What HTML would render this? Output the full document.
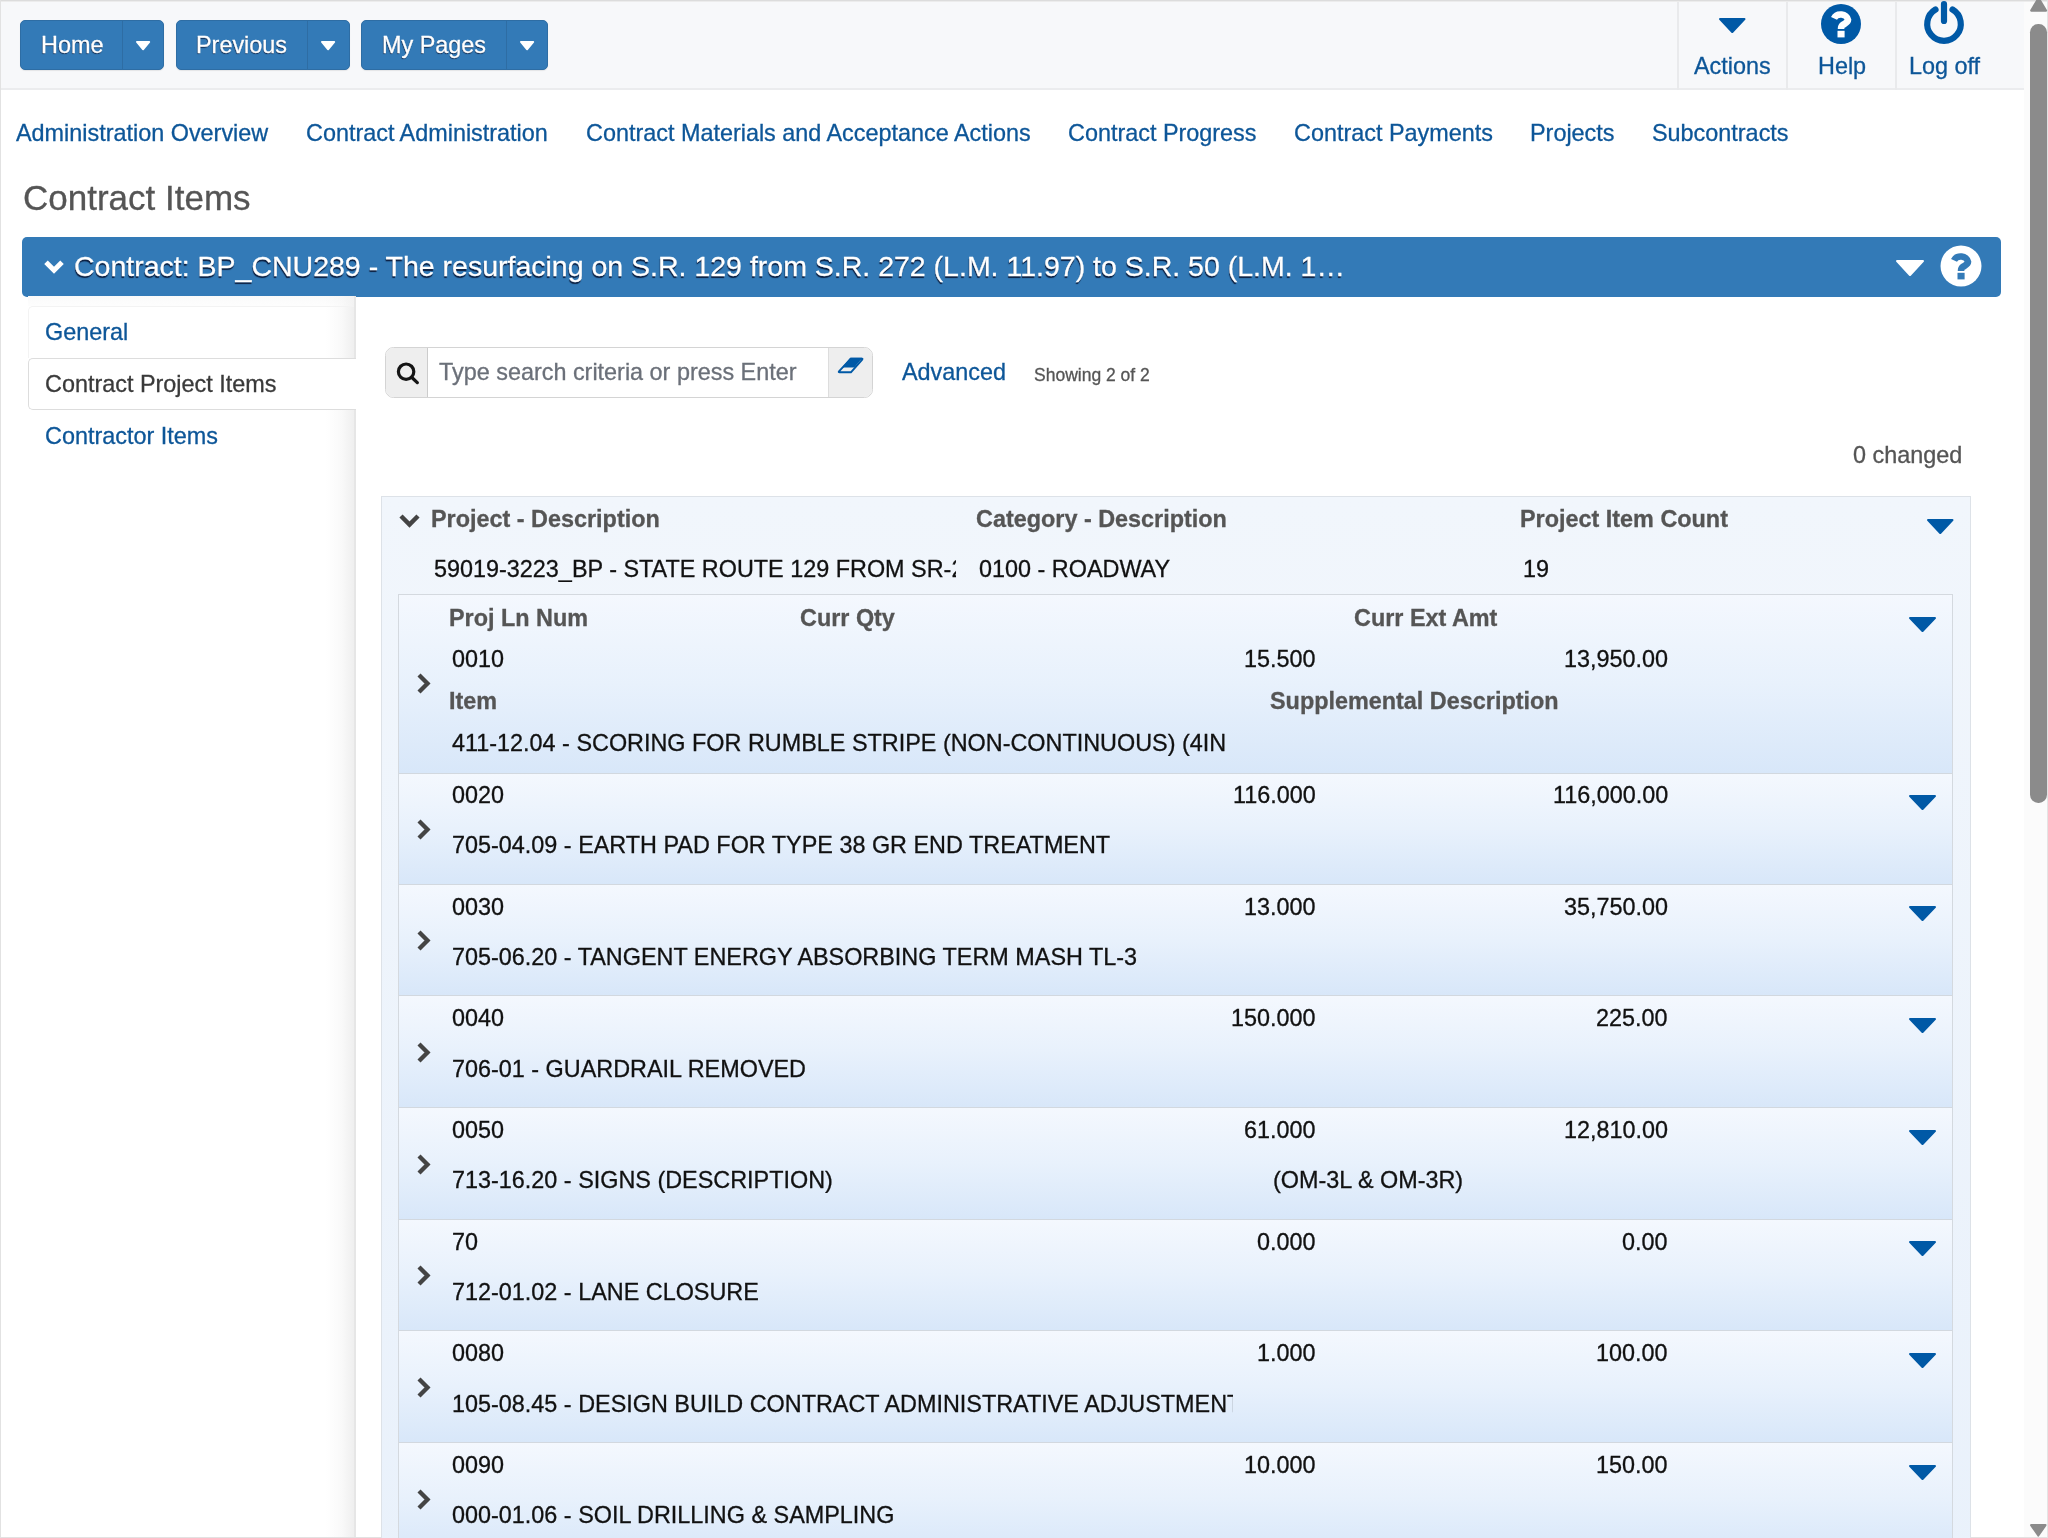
<!DOCTYPE html><html><head><meta charset="utf-8"><title>Contract Items</title><style>
*{margin:0;padding:0;box-sizing:border-box}
html,body{width:2048px;height:1538px;overflow:hidden;background:#fff}
body{font-family:"Liberation Sans",sans-serif;font-size:23.4px;color:#222;position:relative}
.t{position:absolute;white-space:nowrap;line-height:26px;will-change:transform;-webkit-text-stroke:0.3px currentColor}
.lnk{color:#0d5698}
.hd{font-weight:bold;color:#555}
.dk{color:#111}
.abs{position:absolute}
</style></head><body>
<div class="abs" style="left:0;top:0;width:2024px;height:90px;background:#f7f8fa;border-bottom:2px solid #ebecee"></div>
<div class="abs" style="left:0;top:0;width:2048px;height:1px;background:#dcdcdc"></div>
<div class="abs" style="left:0;top:1px;width:2048px;height:1px;background:#ececec"></div>
<div class="abs" style="left:0;top:0;width:1px;height:1538px;background:#e2e2e2"></div>
<div class="abs" style="left:0;top:1537px;width:2048px;height:1px;background:#e2e2e2"></div>
<div class="abs btn" style="left:19.5px;top:20px;width:144.5px;height:50px;background:#337ab7;border:1px solid #2e6da4;border-radius:5px;box-shadow:0 1px 1px rgba(0,0,0,.08)"></div><div class="abs" style="left:122px;top:21px;width:1px;height:48px;background:#2e6da4"></div>
<div class="abs btn" style="left:176px;top:20px;width:174px;height:50px;background:#337ab7;border:1px solid #2e6da4;border-radius:5px;box-shadow:0 1px 1px rgba(0,0,0,.08)"></div><div class="abs" style="left:307px;top:21px;width:1px;height:48px;background:#2e6da4"></div>
<div class="abs btn" style="left:361px;top:20px;width:187px;height:50px;background:#337ab7;border:1px solid #2e6da4;border-radius:5px;box-shadow:0 1px 1px rgba(0,0,0,.08)"></div><div class="abs" style="left:506px;top:21px;width:1px;height:48px;background:#2e6da4"></div>
<div class="t " style="left:40.5px;top:32.20px;color:#fff;text-shadow:-0.4px 1.4px 1px rgba(0,5,30,.75)">Home</div>

<div class="t " style="left:196px;top:32.20px;color:#fff;text-shadow:-0.4px 1.4px 1px rgba(0,5,30,.75)">Previous</div>

<div class="t " style="left:382px;top:32.20px;color:#fff;text-shadow:-0.4px 1.4px 1px rgba(0,5,30,.75)">My Pages</div>

<svg class="abs" style="left:135.20px;top:40.00px" width="16.20" height="11.30" viewBox="0 0 16.20 11.30"><path d="M1.90 1.90 L14.30 1.90 L8.10 9.40 Z" fill="#fff" stroke="#fff" stroke-width="1.8" stroke-linejoin="round"/></svg>
<svg class="abs" style="left:320.20px;top:40.00px" width="16.20" height="11.30" viewBox="0 0 16.20 11.30"><path d="M1.90 1.90 L14.30 1.90 L8.10 9.40 Z" fill="#fff" stroke="#fff" stroke-width="1.8" stroke-linejoin="round"/></svg>
<svg class="abs" style="left:519.20px;top:40.00px" width="16.20" height="11.30" viewBox="0 0 16.20 11.30"><path d="M1.90 1.90 L14.30 1.90 L8.10 9.40 Z" fill="#fff" stroke="#fff" stroke-width="1.8" stroke-linejoin="round"/></svg>
<div class="abs" style="left:1677px;top:2px;width:2px;height:88px;background:#e9eaec"></div>
<div class="abs" style="left:1785.5px;top:2px;width:2px;height:88px;background:#e9eaec"></div>
<div class="abs" style="left:1894.5px;top:2px;width:2px;height:88px;background:#e9eaec"></div>
<svg class="abs" style="left:1718.00px;top:17.00px" width="28.50" height="17.00" viewBox="0 0 28.50 17.00"><path d="M2.10 2.10 L26.40 2.10 L14.25 14.90 Z" fill="#0059a6" stroke="#0059a6" stroke-width="2.2" stroke-linejoin="round"/></svg>
<div class="t lnk" style="left:1694px;top:53.30px;">Actions</div>

<svg class="abs" style="left:1816.00px;top:-0.60px" width="50" height="50" viewBox="-25 -25 50 50"><circle cx="0" cy="0" r="20" fill="#0059a6"/><path d="M-7.0 -5.6 A7.3 6.2 0 0 1 7.0 -4.2 C7.0 -1.4 3.8 -0.6 1.5 1.2 Q0.05 2.3 0.05 5.0" fill="none" stroke="#fff" stroke-width="6.6"/><rect x="-3.5" y="6.8" width="7.1" height="6.6" fill="#fff"/></svg>
<div class="t lnk" style="left:1817.7px;top:53.30px;">Help</div>

<svg class="abs" style="left:1921px;top:0px" width="46" height="48" viewBox="0 0 46 48"><path d="M14.5 9.5 A16.8 16.8 0 1 0 31.5 9.5" fill="none" stroke="#0059a6" stroke-width="6.2" stroke-linecap="round"/><line x1="23" y1="4" x2="23" y2="21" stroke="#0059a6" stroke-width="6.2" stroke-linecap="round"/></svg>
<div class="t lnk" style="left:1908.5px;top:53.30px;">Log off</div>

<div class="abs" style="left:2024px;top:2px;width:23px;height:1535px;background:#fbfbfb"></div>
<div class="abs" style="left:2047px;top:0;width:1px;height:1538px;background:#e4e4e4"></div>
<div class="abs" style="left:2030.3px;top:24.2px;width:16.4px;height:779px;background:#8b8b8b;border-radius:8.2px"></div>
<svg class="abs" style="left:2029px;top:-4px" width="19" height="17" viewBox="0 0 19 17"><path d="M9.6 2.2 L17 14.6 L2.2 14.6 Z" fill="#8b8b8b" stroke="#8b8b8b" stroke-width="2.2" stroke-linejoin="round"/></svg>
<svg class="abs" style="left:2029.10px;top:1523.30px" width="18.60" height="14.60" viewBox="0 0 18.60 14.60"><path d="M2.10 2.10 L16.50 2.10 L9.30 12.50 Z" fill="#8b8b8b" stroke="#8b8b8b" stroke-width="2.2" stroke-linejoin="round"/></svg>
<div class="t lnk" style="left:16px;top:119.60px;">Administration Overview</div>

<div class="t lnk" style="left:306px;top:119.60px;">Contract Administration</div>

<div class="t lnk" style="left:585.5px;top:119.60px;">Contract Materials and Acceptance Actions</div>

<div class="t lnk" style="left:1068px;top:119.60px;">Contract Progress</div>

<div class="t lnk" style="left:1294px;top:119.60px;">Contract Payments</div>

<div class="t lnk" style="left:1530px;top:119.60px;">Projects</div>

<div class="t lnk" style="left:1652px;top:119.60px;">Subcontracts</div>

<div class="t" style="left:23px;top:178.1px;font-size:35px;line-height:40px;color:#555">Contract Items</div>
<div class="abs" style="left:22px;top:236.5px;width:1979px;height:60px;background:#337ab7;border-radius:5px"></div>
<svg class="abs" style="left:42px;top:258px" width="24" height="18" viewBox="0 0 24 18"><path d="M4 4.3 L12 12.3 L20 4.3" fill="none" stroke="#fff" stroke-width="5"/></svg>
<div class="t" style="left:74.3px;top:251.2px;font-size:28.5px;line-height:31px;color:#fff;text-shadow:-0.4px 1.5px 1px rgba(0,5,30,.8)">Contract: BP_CNU289 - The resurfacing on S.R. 129 from S.R. 272 (L.M. 11.97) to S.R. 50 (L.M. 1…</div>
<svg class="abs" style="left:1894.60px;top:259.10px" width="30.00" height="18.00" viewBox="0 0 30.00 18.00"><path d="M2.10 2.10 L27.90 2.10 L15.00 15.90 Z" fill="#fff" stroke="#fff" stroke-width="2.2" stroke-linejoin="round"/></svg>
<svg class="abs" style="left:1936.20px;top:241.30px" width="50" height="50" viewBox="-25 -25 50 50"><circle cx="0" cy="0" r="20.5" fill="#fff"/><path d="M-7.0 -5.6 A7.3 6.2 0 0 1 7.0 -4.2 C7.0 -1.4 3.8 -0.6 1.5 1.2 Q0.05 2.3 0.05 5.0" fill="none" stroke="#337ab7" stroke-width="6.6"/><rect x="-3.5" y="6.8" width="7.1" height="6.6" fill="#337ab7"/></svg>
<div class="abs" style="left:28px;top:296px;width:328px;height:1241px;background:linear-gradient(to right,#fff 0,#fff 298px,#f9f9f9 314px,#efefef 326px)"></div>
<div class="abs" style="left:354px;top:296px;width:2px;height:1241px;background:#e6e6e6"></div>
<div class="abs" style="left:28px;top:296px;width:326px;height:10px;background:linear-gradient(to bottom,rgba(244,244,244,.5),rgba(250,250,250,.3))"></div>
<div class="abs" style="left:28px;top:306px;width:326px;height:52px;border:1px solid #f3f3f3;border-right:none;border-bottom:none;border-radius:5px 0 0 0"></div>
<div class="abs" style="left:28px;top:357.5px;width:328px;height:52px;background:#fff;border:1px solid #ddd;border-right:none;border-radius:5px 0 0 5px"></div>
<div class="t lnk" style="left:45px;top:318.70px;">General</div>

<div class="t " style="left:45px;top:371.00px;color:#3a3a3a">Contract Project Items</div>

<div class="t lnk" style="left:45px;top:423.00px;">Contractor Items</div>

<div class="abs" style="left:385px;top:347px;width:488px;height:51px;border:1px solid #d4d4d4;border-radius:8.5px;background:#fff;overflow:hidden"><div class="abs" style="left:0;top:0;width:42px;height:49px;background:#eee;border-right:1px solid #ccc"></div><div class="abs" style="left:442px;top:0;width:45px;height:49px;background:#eee;border-left:1px solid #ddd"></div></div>
<svg class="abs" style="left:395px;top:360px" width="26" height="26" viewBox="0 0 26 26"><circle cx="11.1" cy="11.7" r="7.7" fill="none" stroke="#151515" stroke-width="3.2"/><line x1="16.6" y1="17.2" x2="22.3" y2="22.6" stroke="#151515" stroke-width="3.3" stroke-linecap="round"/></svg>
<div class="t " style="left:438.5px;top:359.00px;color:#6b7079">Type search criteria or press Enter</div>

<svg class="abs" style="left:826px;top:346px" width="50" height="40" viewBox="0 0 50 40"><path d="M24.8 12.6 L35.6 12.6 Q37 12.6 36.2 13.6 L24.9 26.3 L13.6 26.3 Q12.2 26.3 13 25.3 Z" fill="none" stroke="#0059a6" stroke-width="1.9" stroke-linejoin="round"/><path d="M24.3 11.7 L36.5 11.7 L28.3 21.6 L16.2 21.6 Z" fill="#0059a6"/></svg>
<div class="t lnk" style="left:902px;top:358.50px;">Advanced</div>

<div class="t" style="left:1034px;top:364.5px;font-size:17.5px;line-height:20px;color:#555">Showing 2 of 2</div>
<div class="t " style="right:85.5px;top:442.20px;color:#555">0 changed</div>

<div class="abs" style="left:381px;top:496px;width:1590px;height:1100px;border:1px solid #dde2e8;background:linear-gradient(to bottom,#f1f6fc,#e9f1fb)"></div>
<svg class="abs" style="left:397px;top:512px" width="26" height="18" viewBox="0 0 26 18"><path d="M4 4 L12.5 12.5 L21 4" fill="none" stroke="#444" stroke-width="4.5"/></svg>
<div class="t hd" style="left:430.5px;top:506.30px;">Project - Description</div>

<div class="t hd" style="left:975.5px;top:505.80px;">Category - Description</div>

<div class="t hd" style="left:1519.5px;top:505.80px;">Project Item Count</div>

<svg class="abs" style="left:1925.50px;top:518.10px" width="28.50" height="17.00" viewBox="0 0 28.50 17.00"><path d="M2.10 2.10 L26.40 2.10 L14.25 14.90 Z" fill="#0059a6" stroke="#0059a6" stroke-width="2.2" stroke-linejoin="round"/></svg>
<div class="t dk" style="left:434px;top:556px;width:522px;overflow:hidden">59019-3223_BP - STATE ROUTE 129 FROM SR-272 TO SR-50</div>
<div class="t dk" style="left:979px;top:556.00px;">0100 - ROADWAY</div>

<div class="t dk" style="left:1523px;top:556.00px;">19</div>

<div class="abs" style="left:398px;top:594px;width:1555px;height:950px;border-left:1px solid #d4d9df;border-right:1px solid #d4d9df;border-top:1px solid #d4d9df"></div>
<div class="abs" style="left:399px;top:595px;width:1553px;height:179px;background:linear-gradient(to bottom,#f4f8fe 0%,#e8f1fc 50%,#d8e7f9 100%);border-bottom:1px solid #d2d8df"></div>
<div class="t hd" style="left:449.3px;top:604.90px;">Proj Ln Num</div>

<div class="t hd" style="left:800.4px;top:604.90px;">Curr Qty</div>

<div class="t hd" style="left:1353.8px;top:604.90px;">Curr Ext Amt</div>

<div class="t dk" style="left:452px;top:646.20px;">0010</div>

<div class="t dk" style="right:732px;top:646.20px;">15.500</div>

<div class="t dk" style="right:380px;top:646.20px;">13,950.00</div>

<div class="t hd" style="left:449px;top:688.40px;">Item</div>

<div class="t hd" style="left:1270px;top:688.40px;">Supplemental Description</div>

<div class="t dk" style="left:452px;top:730.1px;width:776px;overflow:hidden">411-12.04 - SCORING FOR RUMBLE STRIPE (NON-CONTINUOUS) (4IN WIDE)</div>
<svg class="abs" style="left:413px;top:671.0px" width="22" height="26" viewBox="0 0 22 26"><path d="M6 4 L14.5 12.5 L6 21" fill="none" stroke="#444" stroke-width="4.3"/></svg>
<svg class="abs" style="left:1907.50px;top:616.30px" width="29.00" height="17.00" viewBox="0 0 29.00 17.00"><path d="M2.10 2.10 L26.90 2.10 L14.50 14.90 Z" fill="#0059a6" stroke="#0059a6" stroke-width="2.2" stroke-linejoin="round"/></svg>
<div class="abs" style="left:399px;top:774px;width:1553px;height:111px;background:linear-gradient(to bottom,#f4f8fe 0%,#e8f1fc 50%,#d8e7f9 100%);border-bottom:1px solid #d2d8df"></div>
<div class="t dk" style="left:452px;top:782.00px;">0020</div>

<div class="t dk" style="right:732px;top:782.00px;">116.000</div>

<div class="t dk" style="right:380px;top:782.00px;">116,000.00</div>

<div class="t dk" style="left:452px;top:832.3px;width:781px;overflow:hidden">705-04.09 - EARTH PAD FOR TYPE 38 GR END TREATMENT</div>
<svg class="abs" style="left:413px;top:816.6px" width="22" height="26" viewBox="0 0 22 26"><path d="M6 4 L14.5 12.5 L6 21" fill="none" stroke="#444" stroke-width="4.3"/></svg>
<svg class="abs" style="left:1907.50px;top:793.80px" width="29.00" height="17.00" viewBox="0 0 29.00 17.00"><path d="M2.10 2.10 L26.90 2.10 L14.50 14.90 Z" fill="#0059a6" stroke="#0059a6" stroke-width="2.2" stroke-linejoin="round"/></svg>
<div class="abs" style="left:399px;top:885px;width:1553px;height:111px;background:linear-gradient(to bottom,#f4f8fe 0%,#e8f1fc 50%,#d8e7f9 100%);border-bottom:1px solid #d2d8df"></div>
<div class="t dk" style="left:452px;top:893.65px;">0030</div>

<div class="t dk" style="right:732px;top:893.65px;">13.000</div>

<div class="t dk" style="right:380px;top:893.65px;">35,750.00</div>

<div class="t dk" style="left:452px;top:944.0px;width:781px;overflow:hidden">705-06.20 - TANGENT ENERGY ABSORBING TERM MASH TL-3</div>
<svg class="abs" style="left:413px;top:928.2px" width="22" height="26" viewBox="0 0 22 26"><path d="M6 4 L14.5 12.5 L6 21" fill="none" stroke="#444" stroke-width="4.3"/></svg>
<svg class="abs" style="left:1907.50px;top:905.45px" width="29.00" height="17.00" viewBox="0 0 29.00 17.00"><path d="M2.10 2.10 L26.90 2.10 L14.50 14.90 Z" fill="#0059a6" stroke="#0059a6" stroke-width="2.2" stroke-linejoin="round"/></svg>
<div class="abs" style="left:399px;top:996px;width:1553px;height:112px;background:linear-gradient(to bottom,#f4f8fe 0%,#e8f1fc 50%,#d8e7f9 100%);border-bottom:1px solid #d2d8df"></div>
<div class="t dk" style="left:452px;top:1005.30px;">0040</div>

<div class="t dk" style="right:732px;top:1005.30px;">150.000</div>

<div class="t dk" style="right:380px;top:1005.30px;">225.00</div>

<div class="t dk" style="left:452px;top:1055.6px;width:781px;overflow:hidden">706-01 - GUARDRAIL REMOVED</div>
<svg class="abs" style="left:413px;top:1039.9px" width="22" height="26" viewBox="0 0 22 26"><path d="M6 4 L14.5 12.5 L6 21" fill="none" stroke="#444" stroke-width="4.3"/></svg>
<svg class="abs" style="left:1907.50px;top:1017.10px" width="29.00" height="17.00" viewBox="0 0 29.00 17.00"><path d="M2.10 2.10 L26.90 2.10 L14.50 14.90 Z" fill="#0059a6" stroke="#0059a6" stroke-width="2.2" stroke-linejoin="round"/></svg>
<div class="abs" style="left:399px;top:1108px;width:1553px;height:112px;background:linear-gradient(to bottom,#f4f8fe 0%,#e8f1fc 50%,#d8e7f9 100%);border-bottom:1px solid #d2d8df"></div>
<div class="t dk" style="left:452px;top:1116.95px;">0050</div>

<div class="t dk" style="right:732px;top:1116.95px;">61.000</div>

<div class="t dk" style="right:380px;top:1116.95px;">12,810.00</div>

<div class="t dk" style="left:452px;top:1167.3px;width:781px;overflow:hidden">713-16.20 - SIGNS (DESCRIPTION)</div>
<div class="t dk" style="left:1273px;top:1167.25px;">(OM-3L &amp; OM-3R)</div>

<svg class="abs" style="left:413px;top:1151.6px" width="22" height="26" viewBox="0 0 22 26"><path d="M6 4 L14.5 12.5 L6 21" fill="none" stroke="#444" stroke-width="4.3"/></svg>
<svg class="abs" style="left:1907.50px;top:1128.75px" width="29.00" height="17.00" viewBox="0 0 29.00 17.00"><path d="M2.10 2.10 L26.90 2.10 L14.50 14.90 Z" fill="#0059a6" stroke="#0059a6" stroke-width="2.2" stroke-linejoin="round"/></svg>
<div class="abs" style="left:399px;top:1220px;width:1553px;height:111px;background:linear-gradient(to bottom,#f4f8fe 0%,#e8f1fc 50%,#d8e7f9 100%);border-bottom:1px solid #d2d8df"></div>
<div class="t dk" style="left:452px;top:1228.60px;">70</div>

<div class="t dk" style="right:732px;top:1228.60px;">0.000</div>

<div class="t dk" style="right:380px;top:1228.60px;">0.00</div>

<div class="t dk" style="left:452px;top:1278.9px;width:781px;overflow:hidden">712-01.02 - LANE CLOSURE</div>
<svg class="abs" style="left:413px;top:1263.2px" width="22" height="26" viewBox="0 0 22 26"><path d="M6 4 L14.5 12.5 L6 21" fill="none" stroke="#444" stroke-width="4.3"/></svg>
<svg class="abs" style="left:1907.50px;top:1240.40px" width="29.00" height="17.00" viewBox="0 0 29.00 17.00"><path d="M2.10 2.10 L26.90 2.10 L14.50 14.90 Z" fill="#0059a6" stroke="#0059a6" stroke-width="2.2" stroke-linejoin="round"/></svg>
<div class="abs" style="left:399px;top:1331px;width:1553px;height:112px;background:linear-gradient(to bottom,#f4f8fe 0%,#e8f1fc 50%,#d8e7f9 100%);border-bottom:1px solid #d2d8df"></div>
<div class="t dk" style="left:452px;top:1340.25px;">0080</div>

<div class="t dk" style="right:732px;top:1340.25px;">1.000</div>

<div class="t dk" style="right:380px;top:1340.25px;">100.00</div>

<div class="t dk" style="left:452px;top:1390.5px;width:781px;overflow:hidden">105-08.45 - DESIGN BUILD CONTRACT ADMINISTRATIVE ADJUSTMENT</div>
<svg class="abs" style="left:413px;top:1374.8px" width="22" height="26" viewBox="0 0 22 26"><path d="M6 4 L14.5 12.5 L6 21" fill="none" stroke="#444" stroke-width="4.3"/></svg>
<svg class="abs" style="left:1907.50px;top:1352.05px" width="29.00" height="17.00" viewBox="0 0 29.00 17.00"><path d="M2.10 2.10 L26.90 2.10 L14.50 14.90 Z" fill="#0059a6" stroke="#0059a6" stroke-width="2.2" stroke-linejoin="round"/></svg>
<div class="abs" style="left:399px;top:1443px;width:1553px;height:111px;background:linear-gradient(to bottom,#f4f8fe 0%,#e8f1fc 50%,#d8e7f9 100%);border-bottom:1px solid #d2d8df"></div>
<div class="t dk" style="left:452px;top:1451.90px;">0090</div>

<div class="t dk" style="right:732px;top:1451.90px;">10.000</div>

<div class="t dk" style="right:380px;top:1451.90px;">150.00</div>

<div class="t dk" style="left:452px;top:1502.2px;width:781px;overflow:hidden">000-01.06 - SOIL DRILLING &amp; SAMPLING</div>
<svg class="abs" style="left:413px;top:1486.5px" width="22" height="26" viewBox="0 0 22 26"><path d="M6 4 L14.5 12.5 L6 21" fill="none" stroke="#444" stroke-width="4.3"/></svg>
<svg class="abs" style="left:1907.50px;top:1463.70px" width="29.00" height="17.00" viewBox="0 0 29.00 17.00"><path d="M2.10 2.10 L26.90 2.10 L14.50 14.90 Z" fill="#0059a6" stroke="#0059a6" stroke-width="2.2" stroke-linejoin="round"/></svg>
</body></html>
